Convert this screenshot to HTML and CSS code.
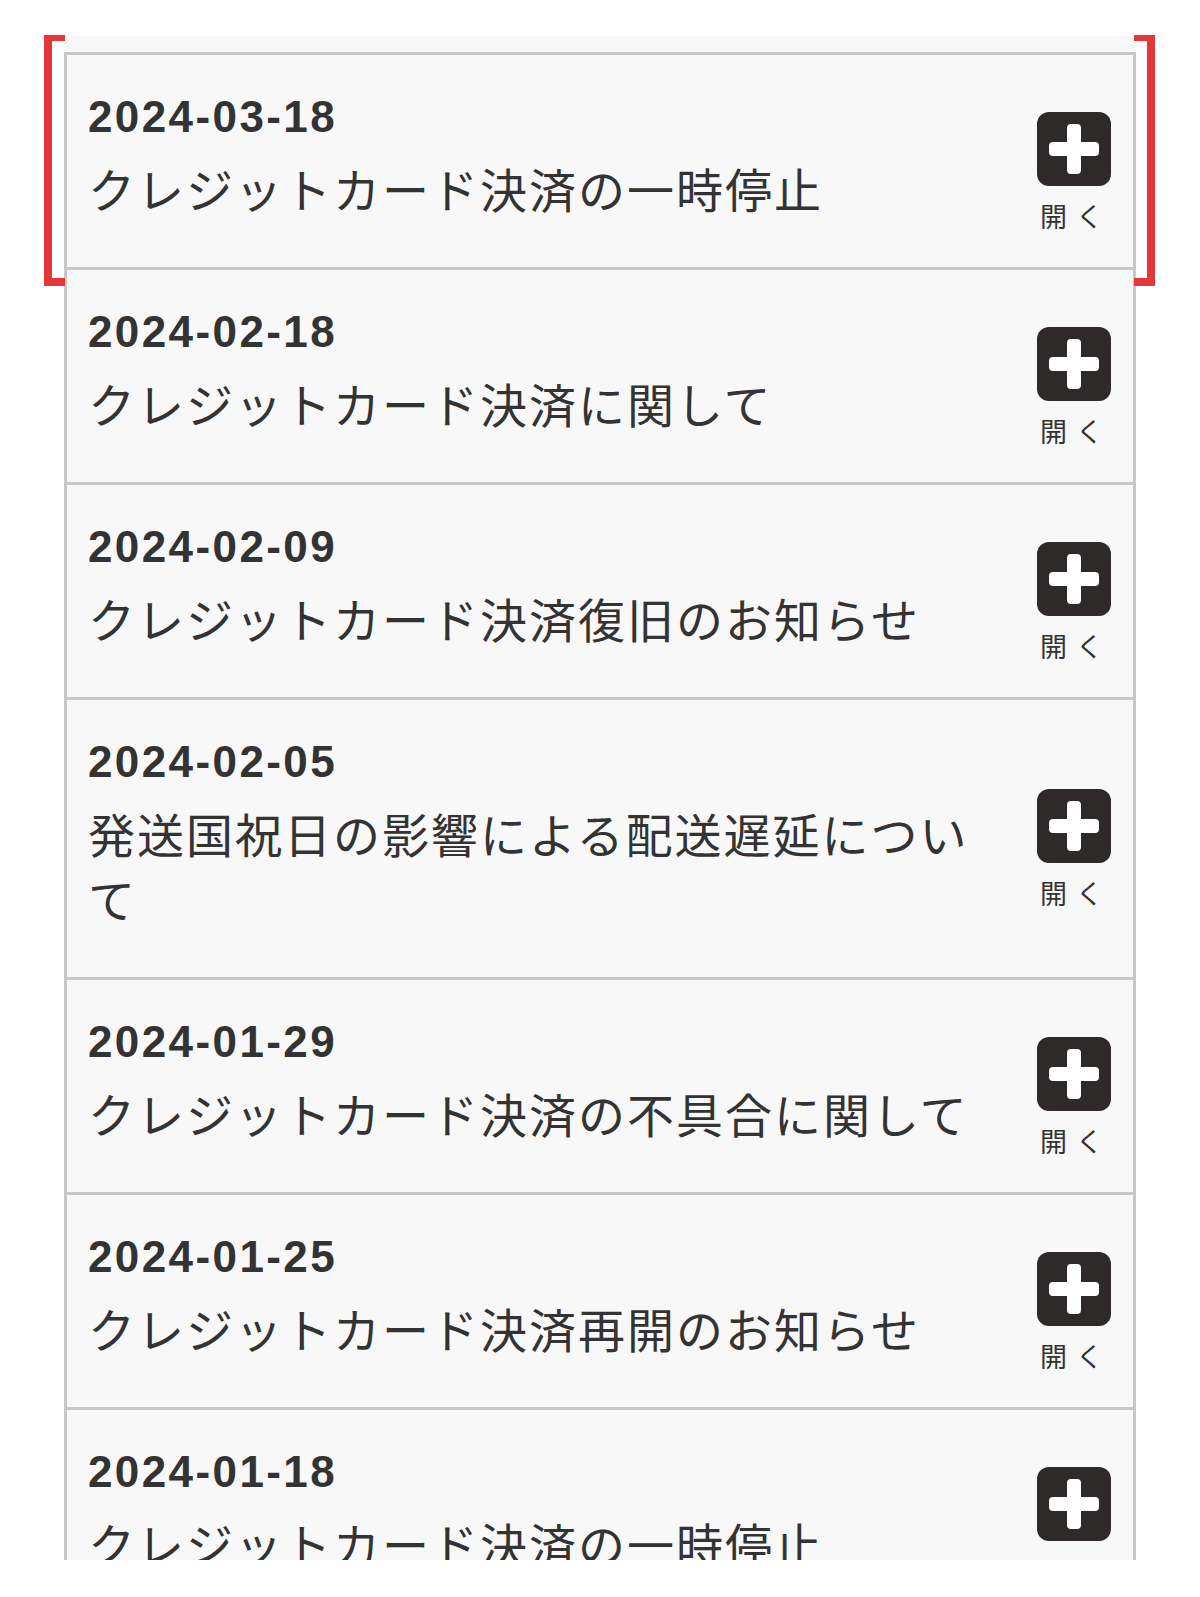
FILE: index.html
```html
<!DOCTYPE html>
<html lang="ja">
<head>
<meta charset="utf-8">
<title>お知らせ</title>
<link rel="stylesheet" href="styles.css">
</head>
<body>
<div class="stage">
  <div class="viewport">
    <div class="prev-tail"></div>
    <ul class="news">
      <li class="item">
        <div class="text"><p class="date">2024-03-18</p><p class="title">クレジットカード決済の一時停止</p></div>
        <div class="toggle"><svg class="plus" viewBox="0 0 74 74"><rect width="74" height="74" rx="12" fill="#2e2a2a"/><rect x="12" y="30" width="50" height="14" rx="4" fill="#fff"/><rect x="30" y="12" width="14" height="50" rx="4" fill="#fff"/></svg><span class="label">開く</span></div>
      </li>
      <li class="item">
        <div class="text"><p class="date">2024-02-18</p><p class="title">クレジットカード決済に関して</p></div>
        <div class="toggle"><svg class="plus" viewBox="0 0 74 74"><rect width="74" height="74" rx="12" fill="#2e2a2a"/><rect x="12" y="30" width="50" height="14" rx="4" fill="#fff"/><rect x="30" y="12" width="14" height="50" rx="4" fill="#fff"/></svg><span class="label">開く</span></div>
      </li>
      <li class="item">
        <div class="text"><p class="date">2024-02-09</p><p class="title">クレジットカード決済復旧のお知らせ</p></div>
        <div class="toggle"><svg class="plus" viewBox="0 0 74 74"><rect width="74" height="74" rx="12" fill="#2e2a2a"/><rect x="12" y="30" width="50" height="14" rx="4" fill="#fff"/><rect x="30" y="12" width="14" height="50" rx="4" fill="#fff"/></svg><span class="label">開く</span></div>
      </li>
      <li class="item">
        <div class="text"><p class="date">2024-02-05</p><p class="title">発送国祝日の影響による配送遅延について</p></div>
        <div class="toggle"><svg class="plus" viewBox="0 0 74 74"><rect width="74" height="74" rx="12" fill="#2e2a2a"/><rect x="12" y="30" width="50" height="14" rx="4" fill="#fff"/><rect x="30" y="12" width="14" height="50" rx="4" fill="#fff"/></svg><span class="label">開く</span></div>
      </li>
      <li class="item">
        <div class="text"><p class="date">2024-01-29</p><p class="title">クレジットカード決済の不具合に関して</p></div>
        <div class="toggle"><svg class="plus" viewBox="0 0 74 74"><rect width="74" height="74" rx="12" fill="#2e2a2a"/><rect x="12" y="30" width="50" height="14" rx="4" fill="#fff"/><rect x="30" y="12" width="14" height="50" rx="4" fill="#fff"/></svg><span class="label">開く</span></div>
      </li>
      <li class="item">
        <div class="text"><p class="date">2024-01-25</p><p class="title">クレジットカード決済再開のお知らせ</p></div>
        <div class="toggle"><svg class="plus" viewBox="0 0 74 74"><rect width="74" height="74" rx="12" fill="#2e2a2a"/><rect x="12" y="30" width="50" height="14" rx="4" fill="#fff"/><rect x="30" y="12" width="14" height="50" rx="4" fill="#fff"/></svg><span class="label">開く</span></div>
      </li>
      <li class="item">
        <div class="text"><p class="date">2024-01-18</p><p class="title">クレジットカード決済の一時停止</p></div>
        <div class="toggle"><svg class="plus" viewBox="0 0 74 74"><rect width="74" height="74" rx="12" fill="#2e2a2a"/><rect x="12" y="30" width="50" height="14" rx="4" fill="#fff"/><rect x="30" y="12" width="14" height="50" rx="4" fill="#fff"/></svg><span class="label">開く</span></div>
      </li>
    </ul>
  </div>
  <div class="bracket bracket-left"></div>
  <div class="bracket bracket-right"></div>
</div>
</body>
</html>
```

FILE: styles.css
```css
* { box-sizing: border-box; }

html, body {
  margin: 0;
  padding: 0;
  background: #ffffff;
}

body {
  padding-top: 36px;
  font-family: "Noto Sans CJK JP", "Noto Sans", sans-serif;
  color: #333333;
}

.stage {
  position: relative;
  width: 1072px;
  margin: 0 auto;
}

.viewport {
  height: 1524px;
  overflow: hidden;
}

.prev-tail {
  height: 19px;
  background: #f8f8f8;
  border-bottom: 3px solid #c8c8c8;
}

.news {
  list-style: none;
  margin: 0;
  padding: 0;
}

.item {
  display: flex;
  align-items: center;
  background: #f8f8f8;
  border: 3px solid #c8c8c8;
  border-top: 0;
  padding: 0 22px 0 21px;
}

.text {
  flex: 1;
  min-width: 0;
  margin-right: 37px;
  padding: 30px 0 47px;
}

.date {
  margin: 0;
  font-family: "Liberation Sans", Arial, sans-serif;
  font-weight: 700;
  font-size: 44px;
  line-height: 64px;
  letter-spacing: 2.4px;
  color: #333333;
}

.title {
  margin: 6px 0 0;
  font-family: "Noto Sans CJK JP", sans-serif;
  font-weight: 400;
  font-size: 47px;
  line-height: 65px;
  letter-spacing: 2px;
  color: #333333;
}

.toggle {
  flex: none;
  width: 74px;
  display: flex;
  flex-direction: column;
  align-items: center;
  padding-top: 23px;
}

.plus {
  display: block;
  width: 74px;
  height: 74px;
}

.label {
  display: block;
  margin-top: 12px;
  font-family: "Noto Sans CJK JP", sans-serif;
  font-size: 27px;
  line-height: 36px;
  letter-spacing: 9px;
  padding-left: 4px;
  white-space: nowrap;
  color: #333333;
}

.bracket {
  position: absolute;
  top: -1px;
  width: 21px;
  height: 251px;
  border-top: 6px solid #e2383a;
  border-bottom: 8px solid #e2383a;
}

.bracket-left {
  left: -20px;
  border-left: 8px solid #e2383a;
}

.bracket-right {
  right: -19px;
  border-right: 8px solid #e2383a;
}
```
